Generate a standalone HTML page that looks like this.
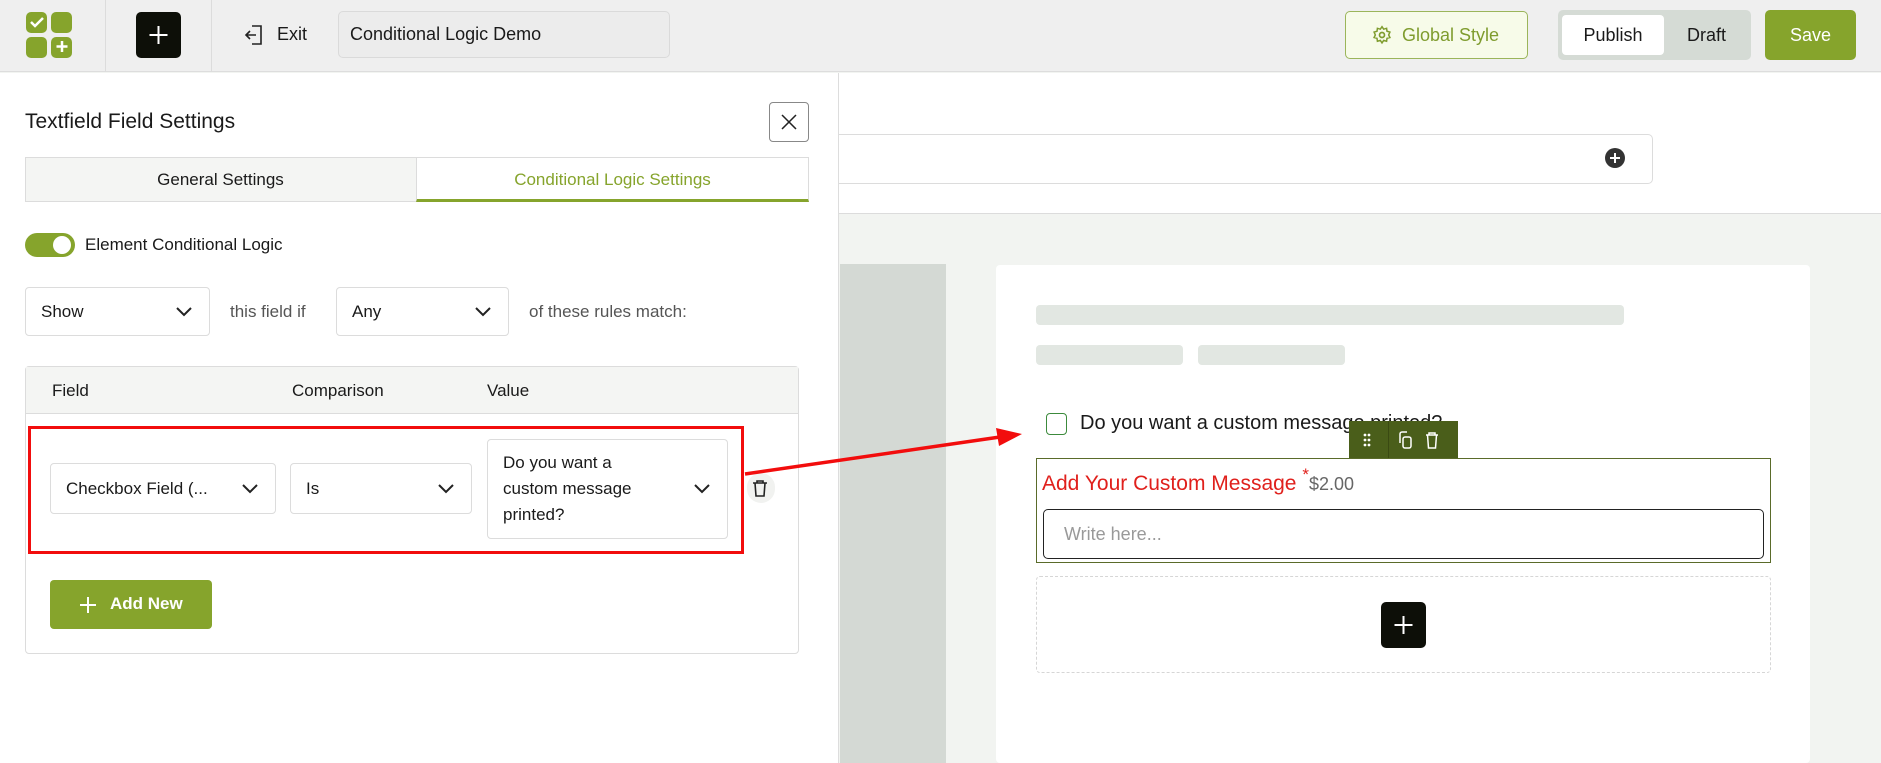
<!DOCTYPE html>
<html><head><meta charset="utf-8"><style>
*{box-sizing:border-box;margin:0;padding:0}
body{width:1881px;height:763px;overflow:hidden;position:relative;font-family:"Liberation Sans",sans-serif;background:#f2f4f1;color:#1a1a1a}
.a{position:absolute}
.sel{position:absolute;border:1px solid #dcdcdc;border-radius:4px;background:#fff;font-size:17px;display:flex;align-items:center;padding-left:15px}
.sel svg{position:absolute;right:16px;top:50%;margin-top:-6px}
</style></head><body>
<!-- header -->
<div class="a" style="left:0;top:0;width:1881px;height:72px;background:#efefef;border-bottom:1px solid #ddd"></div>
<div class="a" style="left:26px;top:12px;width:21px;height:21px;background:#86a42c;border-radius:5px"></div>
<div class="a" style="left:51px;top:12px;width:21px;height:21px;background:#86a42c;border-radius:5px"></div>
<div class="a" style="left:26px;top:37px;width:21px;height:21px;background:#86a42c;border-radius:5px"></div>
<div class="a" style="left:51px;top:37px;width:21px;height:21px;background:#86a42c;border-radius:5px"></div>
<svg class="a" style="left:26px;top:12px" width="46" height="46"><path d="M5 10l4 4 8-8" stroke="#fff" stroke-width="2.5" fill="none"/><path d="M36 29v11M30.5 34.5h11" stroke="#fff" stroke-width="2.5"/></svg>
<div class="a" style="left:105px;top:0;width:1px;height:72px;background:#dcdcdc"></div>
<div class="a" style="left:211px;top:0;width:1px;height:72px;background:#dcdcdc"></div>
<div class="a" style="left:136px;top:12px;width:45px;height:46px;background:#0d0f08;border-radius:5px"></div>
<svg class="a" style="left:136px;top:12px" width="45" height="46"><path d="M22.5 14v18M13.5 23h18" stroke="#fff" stroke-width="2"/></svg>
<svg class="a" style="left:243px;top:23px" width="22" height="24"><path d="M9 3h9v18H9M13 12H3M7 8l-4 4 4 4" stroke="#222" stroke-width="1.6" fill="none"/></svg>
<div class="a" style="left:277px;top:24px;font-size:18px">Exit</div>
<div class="a" style="left:338px;top:11px;width:332px;height:47px;border:1px solid #dadada;border-radius:5px;background:#ececec;font-size:18px;padding:12px 0 0 11px">Conditional Logic Demo</div>
<div class="a" style="left:1345px;top:11px;width:183px;height:48px;border:1px solid #9bb55a;border-radius:5px;background:#f7fbe9;color:#7f9c2e;font-size:18px;padding:13px 0 0 56px">Global Style</div>
<svg class="a" style="left:1372px;top:25px" width="20" height="20" viewBox="0 0 24 24"><circle cx="12" cy="12" r="3" stroke="#7f9c2e" stroke-width="2" fill="none"/><path d="M12 2l2 3 3.5-1 .5 3.5 3.5 1-1.5 3.5 1.5 3-3.5 1-.5 3.5-3.5-1-2 3-2-3-3.5 1-.5-3.5-3.5-1 1.5-3-1.5-3.5 3.5-1 .5-3.5 3.5 1z" stroke="#7f9c2e" stroke-width="1.8" fill="none"/></svg>
<div class="a" style="left:1558px;top:10px;width:193px;height:50px;background:#d5dbd5;border-radius:5px"></div>
<div class="a" style="left:1562px;top:15px;width:102px;height:40px;background:#fff;border-radius:4px;font-size:18px;text-align:center;line-height:40px">Publish</div>
<div class="a" style="left:1664px;top:15px;width:85px;height:40px;font-size:18px;text-align:center;line-height:40px">Draft</div>
<div class="a" style="left:1765px;top:10px;width:91px;height:50px;background:#86a42c;border-radius:5px;color:#fff;font-size:18px;text-align:center;line-height:50px">Save</div>
<!-- right area -->
<div class="a" style="left:838px;top:73px;width:1043px;height:141px;background:#fff;border-bottom:1px solid #dcdcdc"></div>
<div class="a" style="left:820px;top:134px;width:833px;height:50px;border:1px solid #dcdcdc;border-radius:5px;background:#fff"></div>
<div class="a" style="left:1605px;top:148px;width:20px;height:20px;border-radius:50%;background:#333"></div>
<svg class="a" style="left:1605px;top:148px" width="20" height="20"><path d="M10 5v10M5 10h10" stroke="#fff" stroke-width="2"/></svg>
<div class="a" style="left:840px;top:264px;width:106px;height:499px;background:#d4d9d4"></div>
<div class="a" style="left:996px;top:265px;width:814px;height:498px;background:#fff;border-radius:4px"></div>
<div class="a" style="left:1036px;top:305px;width:588px;height:20px;background:#e2e7e2;border-radius:4px"></div>
<div class="a" style="left:1036px;top:345px;width:147px;height:20px;background:#e2e7e2;border-radius:4px"></div>
<div class="a" style="left:1198px;top:345px;width:147px;height:20px;background:#e2e7e2;border-radius:4px"></div>
<div class="a" style="left:1046px;top:413px;width:21px;height:22px;border:1.5px solid #3c8a3c;border-radius:4px"></div>
<div class="a" style="left:1080px;top:412px;font-size:20px">Do you want a custom message printed?</div>
<div class="a" style="left:1349px;top:421px;width:109px;height:38px;background:#4a5e1a"></div>
<div class="a" style="left:1388px;top:421px;width:1px;height:38px;background:#3a4a12"></div>
<svg class="a" style="left:1349px;top:421px" width="109" height="38"><g fill="#fff"><circle cx="16" cy="14" r="1.4"/><circle cx="20" cy="14" r="1.4"/><circle cx="16" cy="19" r="1.4"/><circle cx="20" cy="19" r="1.4"/><circle cx="16" cy="24" r="1.4"/><circle cx="20" cy="24" r="1.4"/></g><g stroke="#fff" stroke-width="1.5" fill="none"><rect x="54" y="16" width="8" height="11" rx="2"/><path d="M51 22V13a2 2 0 0 1 2-2h5"/><path d="M77 14h12M80 14v-2h6v2M78.5 14l1 13h7l1-13"/></g></svg>
<div class="a" style="left:1036px;top:458px;width:735px;height:105px;border:1px solid #5a6b2a"></div>
<div class="a" style="left:1042px;top:467px;font-size:21px;color:#e0201c;white-space:nowrap">Add Your Custom Message <sup style="font-size:17px;position:relative;top:-2px">*</sup><span style="font-size:18px;color:#666">$2.00</span></div>
<div class="a" style="left:1043px;top:509px;width:721px;height:50px;border:1.5px solid #222;border-radius:5px;font-size:18px;color:#999;padding:14px 0 0 20px">Write here...</div>
<div class="a" style="left:1036px;top:576px;width:735px;height:97px;border:1px dashed #d6d6d6;border-radius:4px"></div>
<div class="a" style="left:1381px;top:602px;width:45px;height:46px;background:#0d0f08;border-radius:5px"></div>
<svg class="a" style="left:1381px;top:602px" width="45" height="46"><path d="M22.5 14v18M13.5 23h18" stroke="#fff" stroke-width="2"/></svg>
<!-- left panel -->
<div class="a" style="left:0;top:73px;width:839px;height:690px;background:#fff;border-right:1px solid #ddd"></div>
<div class="a" style="left:25px;top:110px;font-size:21px">Textfield Field Settings</div>
<div class="a" style="left:769px;top:102px;width:40px;height:40px;border:1px solid #888;border-radius:4px"></div>
<svg class="a" style="left:769px;top:102px" width="40" height="40"><path d="M13 13l14 14M27 13L13 27" stroke="#222" stroke-width="1.5"/></svg>
<div class="a" style="left:25px;top:157px;width:784px;height:45px;border:1px solid #dcdcdc;background:#f4f5f3"></div>
<div class="a" style="left:416px;top:157px;width:393px;height:45px;background:#fff;border:1px solid #dcdcdc;border-bottom:3px solid #86a42c"></div>
<div class="a" style="left:25px;top:170px;width:391px;text-align:center;font-size:17px">General Settings</div>
<div class="a" style="left:416px;top:170px;width:393px;text-align:center;font-size:17px;color:#86a42c">Conditional Logic Settings</div>
<div class="a" style="left:25px;top:233px;width:50px;height:24px;background:#86a42c;border-radius:12px"></div>
<div class="a" style="left:53px;top:236px;width:18px;height:18px;background:#fff;border-radius:50%"></div>
<div class="a" style="left:85px;top:235px;font-size:17px">Element Conditional Logic</div>
<div class="sel" style="left:25px;top:287px;width:185px;height:49px">Show<svg width="18" height="12"><path d="M2 2l7 7 7-7" stroke="#222" stroke-width="2" fill="none"/></svg></div>
<div class="a" style="left:230px;top:302px;font-size:17px;color:#555">this field if</div>
<div class="sel" style="left:336px;top:287px;width:173px;height:49px">Any<svg width="18" height="12"><path d="M2 2l7 7 7-7" stroke="#222" stroke-width="2" fill="none"/></svg></div>
<div class="a" style="left:529px;top:302px;font-size:17px;color:#555">of these rules match:</div>
<div class="a" style="left:25px;top:366px;width:774px;height:288px;border:1px solid #dcdcdc;border-radius:4px"></div>
<div class="a" style="left:26px;top:367px;width:772px;height:47px;background:#f4f5f3;border-bottom:1px solid #dcdcdc"></div>
<div class="a" style="left:52px;top:381px;font-size:17px">Field</div>
<div class="a" style="left:292px;top:381px;font-size:17px">Comparison</div>
<div class="a" style="left:487px;top:381px;font-size:17px">Value</div>
<div class="sel" style="left:50px;top:463px;width:226px;height:51px">Checkbox Field (...<svg width="18" height="12"><path d="M2 2l7 7 7-7" stroke="#222" stroke-width="2" fill="none"/></svg></div>
<div class="sel" style="left:290px;top:463px;width:182px;height:51px">Is<svg width="18" height="12"><path d="M2 2l7 7 7-7" stroke="#222" stroke-width="2" fill="none"/></svg></div>
<div class="sel" style="left:487px;top:439px;width:241px;height:100px;line-height:26px">Do you want a<br>custom message<br>printed?<svg width="18" height="12"><path d="M2 2l7 7 7-7" stroke="#222" stroke-width="2" fill="none"/></svg></div>
<div class="a" style="left:28px;top:426px;width:716px;height:128px;border:3.5px solid #f20d0d"></div>
<div class="a" style="left:747px;top:473px;width:28px;height:30px;background:#f1f2f0;border-radius:14px"></div>
<svg class="a" style="left:750px;top:478px" width="20" height="20"><path d="M3 5h14M7 5V3h6v2M5 5l1 13h8l1-13" stroke="#222" stroke-width="1.6" fill="none"/></svg>
<div class="a" style="left:50px;top:580px;width:162px;height:49px;background:#86a42c;border-radius:4px;color:#fff;font-size:17px;font-weight:bold;padding:14px 0 0 60px">Add New</div>
<svg class="a" style="left:78px;top:595px" width="20" height="20"><path d="M10 2v16M2 10h16" stroke="#fff" stroke-width="2"/></svg>
<svg class="a" style="left:0;top:0" width="1881" height="763"><path d="M745 474L1000 437" stroke="#f20d0d" stroke-width="3.5"/><path d="M1022 434L996 428L999 446Z" fill="#f20d0d"/></svg>
</body></html>
